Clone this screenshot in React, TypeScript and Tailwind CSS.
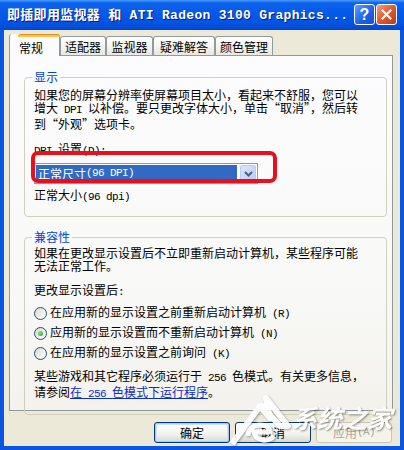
import type { ReactNode } from "react";

// half-width latin runs, SimSun style (6px per char)
const L = ({ children }: { children: ReactNode }) => (
  <span className="font-['Liberation_Mono',monospace] text-[11px] tracking-[-0.6px]">{children}</span>
);

const tabs = [
  { label: "常规", w: "w-[51px]", active: true },
  { label: "适配器", w: "w-[46px]" },
  { label: "监视器", w: "w-[47px]" },
  { label: "疑难解答", w: "w-[62px]" },
  { label: "颜色管理", w: "w-[58px]" },
];

function Radio({ checked, children }: { checked?: boolean; children: ReactNode }) {
  return (
    <div className="h-[20px] flex items-center">
      <span className="w-[13px] h-[13px] shrink-0 rounded-full border border-[#1c5180] bg-[linear-gradient(135deg,#dcd9cb,#ffffff)] flex items-center justify-center">
        {checked && (
          <span className="w-[5px] h-[5px] rounded-full bg-[radial-gradient(circle_at_35%_35%,#8ee08e,#21a121)]" />
        )}
      </span>
      <span className="ml-[3px] whitespace-nowrap">{children}</span>
    </div>
  );
}

function GroupBox({ title, className, children }: { title: string; className: string; children: ReactNode }) {
  return (
    <div className={`relative border border-[#d0d0bf] rounded-[4px] pl-[9px] ${className}`}>
      <span className="absolute -top-[8px] left-[7px] px-[2px] bg-[#fbfbfb] text-[#0046d5]">{title}</span>
      {children}
    </div>
  );
}

export default function App() {
  return (
    <div className="relative w-[404px] h-[450px] overflow-hidden bg-[#0a55e2] text-black text-[12px] leading-[13px] font-['Noto_Sans_CJK_SC',sans-serif]">
      {/* title bar */}
      <div className="h-[30px] pl-[7px] pr-[7px] flex items-center justify-between bg-[linear-gradient(to_bottom,#4a9bff_0%,#0b62ec_10%,#0559e8_45%,#0353e2_80%,#0146cf_100%)]">
        <span className="whitespace-nowrap font-bold text-white text-[13px] tracking-[0.3px] font-['Liberation_Mono','Noto_Sans_CJK_SC',monospace] [text-shadow:1px_1px_#0a1a7a]">
          即插即用监视器 和 ATI Radeon 3100 Graphics...
        </span>
        <div className="flex gap-[1px] pb-[1px]">
          <div className="w-[21px] h-[21px] rounded-[3px] border border-white bg-[linear-gradient(135deg,#5aa0ff,#1d5fe8_60%,#1650d8)] flex items-center justify-center text-white font-bold text-[16px] leading-none font-['Liberation_Sans',sans-serif]">
            ?
          </div>
          <div className="w-[21px] h-[21px] rounded-[3px] border border-white bg-[linear-gradient(135deg,#f0a080,#e0582e_50%,#c23a14)] flex items-center justify-center">
            <svg width="11" height="11" viewBox="0 0 11 11">
              <path d="M1.5 1.5 L9.5 9.5 M9.5 1.5 L1.5 9.5" stroke="#fff" strokeWidth="2.2" strokeLinecap="square" />
            </svg>
          </div>
        </div>
      </div>

      {/* client area */}
      <div className="mx-[4px] h-[416px] bg-[#ece9d8] px-[5px] pt-[4px]">
        <div className="flex items-end h-[21px]">
          {tabs.map((t) =>
            t.active ? (
              <div
                key={t.label}
                className={`${t.w} relative z-10 -mb-px h-[22px] rounded-t-[3px] border border-t-0 border-b-0 border-[#919b9c] bg-[#fcfcfe] pl-[9px]`}
              >
                <div className="-mx-px h-[3px] rounded-t-[3px] border-t border-[#e68b2c] bg-[#ffc73c]" />
                <div className="pt-[4px]">{t.label}</div>
              </div>
            ) : (
              <div
                key={t.label}
                className={`${t.w} h-[19px] rounded-t-[3px] border border-b-0 border-[#919b9c] bg-[linear-gradient(to_bottom,#ffffff,#f3f3ef_60%,#e8e7e0)] flex items-center justify-center`}
              >
                {t.label}
              </div>
            )
          )}
        </div>

        {/* tab panel */}
        <div className="w-[384px] h-[356px] border border-[#919b9c] bg-[linear-gradient(to_bottom,#fcfcfe,#f8f8f6_70%,#f3f2ec)] pl-[14px] pt-[21px]">
          <GroupBox title="显示" className="w-[363px] pt-[10px] pb-[12px]">
            <div className="whitespace-nowrap">
              如果您的屏幕分辨率使屏幕项目太小，看起来不舒服，您可以
              <br />
              增大<L> DPI </L>以补偿。要只更改字体大小，单击“取消”，然后转
              <br />
              到“外观”选项卡。
            </div>
            <div className="mt-[12px]">
              <L>DPI </L>设置<L>(D):</L>
            </div>
            <div className="mt-[5px] w-[224px] h-[21px] border border-[#7f9db9] bg-white flex p-[1px] gap-[3px]">
              <div className="flex-1 bg-[#316ac5] text-white flex items-center pl-[2px] leading-none">
                正常尺寸<L>(96 DPI)</L>
              </div>
              <div className="w-[16px] rounded-[2px] border border-[#b9ccf5] bg-[linear-gradient(135deg,#dce7fe,#b6cbf9)] flex items-center justify-center">
                <svg width="9" height="6" viewBox="0 0 9 6">
                  <path d="M1 1 L4.5 4.5 L8 1" fill="none" stroke="#4d6185" strokeWidth="2" />
                </svg>
              </div>
            </div>
            <div className="mt-[4px]">
              正常大小<L>(96 dpi)</L>
            </div>
          </GroupBox>

          <GroupBox title="兼容性" className="w-[363px] mt-[20px] pt-[8px] pb-[13px]">
            <div className="whitespace-nowrap">
              如果在更改显示设置后不立即重新启动计算机，某些程序可能
              <br />
              无法正常工作。
            </div>
            <div className="mt-[11px]">
              更改显示设置后<L>:</L>
            </div>
            <div className="mt-[4px]">
              <Radio>
                在应用新的显示设置之前重新启动计算机<L> (R)</L>
              </Radio>
              <Radio checked>
                应用新的显示设置而不重新启动计算机<L> (N)</L>
              </Radio>
              <Radio>
                在应用新的显示设置之前询问<L> (K)</L>
              </Radio>
            </div>
            <div className="mt-[6px] whitespace-nowrap">
              某些游戏和其它程序必须运行于<L> 256 </L>色模式。有关更多信息，
              <br />
              请参阅
              <span className="text-[#0b2fc0] underline">
                在<L> 256 </L>色模式下运行程序
              </span>
              。
            </div>
          </GroupBox>
        </div>

        {/* buttons */}
        <div className="mt-[11px] flex justify-end gap-[5px] pr-[3px]">
          <div className="w-[76px] h-[21px] rounded-[3px] border border-[#003c74] bg-[linear-gradient(to_bottom,#ffffff,#f2f2ec_60%,#dcd7cb)] shadow-[inset_0_0_0_1px_#a8c8f4,inset_0_0_0_2px_#cfe1fb] flex items-center justify-center">
            确定
          </div>
          <div className="w-[76px] h-[21px] rounded-[3px] border border-[#003c74] bg-[linear-gradient(to_bottom,#ffffff,#f2f2ec_60%,#dcd7cb)] flex items-center justify-center">
            取消
          </div>
          <div className="w-[76px] h-[21px] rounded-[3px] border border-[#c9c7ba] bg-[#f5f4ea] text-[#aca899] flex items-center justify-center">
            应用<L>(A)</L>
          </div>
        </div>
      </div>

      {/* red annotation around the combo */}
      <div className="absolute left-[31px] top-[151px] w-[246px] h-[32px] rounded-[7px] border-[4px] border-[#e8101c]" />

      {/* watermark */}
      <div className="absolute left-[230px] top-[392px] flex items-end opacity-90 pointer-events-none">
        <svg width="62" height="54" viewBox="0 0 62 54" className="[filter:drop-shadow(1px_1px_1px_rgba(0,0,0,0.35))]">
          <path d="M2 52 L30 14 L40 26 L36 6 L58 34 L50 34 L30 12" fill="none" stroke="#fff" strokeWidth="6" strokeLinejoin="round" />
          <path d="M18 44 C18 30 40 30 40 40 L24 40 C26 50 38 50 44 44" fill="none" stroke="#fff" strokeWidth="5" />
        </svg>
        <span className="mb-[16px] text-[25px] leading-none font-bold italic text-white whitespace-nowrap [text-shadow:1px_1px_2px_rgba(0,0,0,0.45)]">
          系统之家
        </span>
      </div>
    </div>
  );
}
